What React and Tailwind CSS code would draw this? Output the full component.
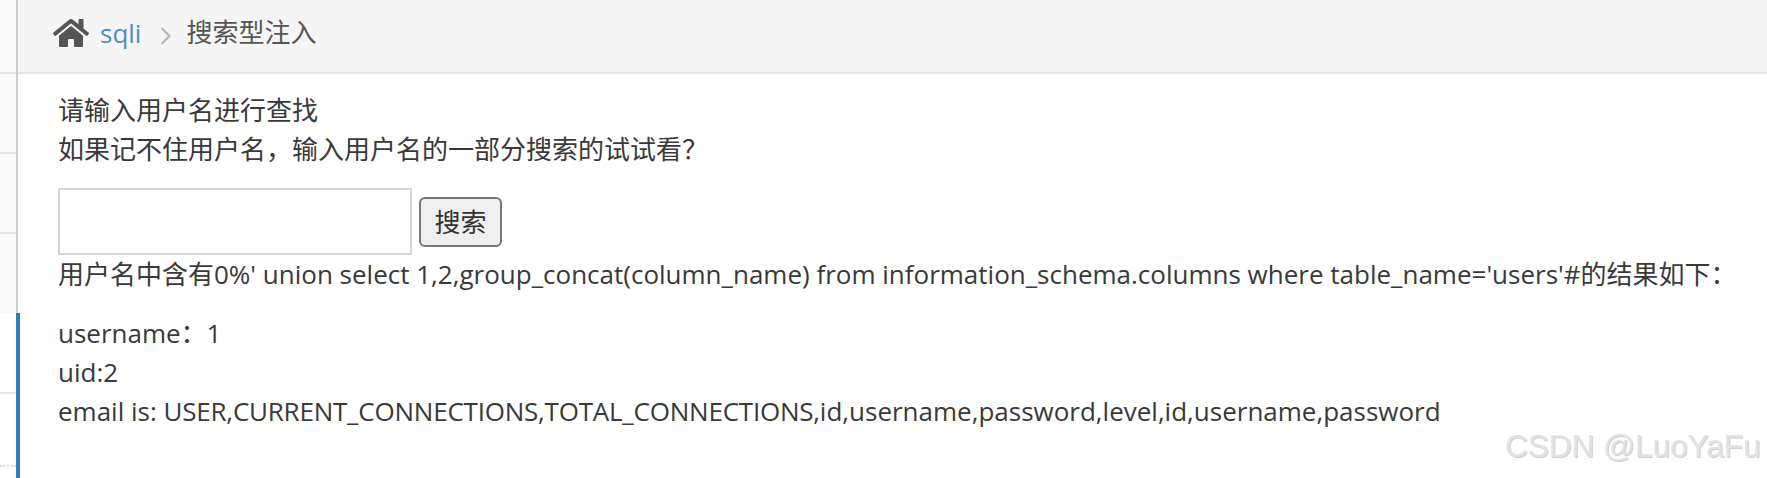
import React from 'react';
import { FaHome } from 'react-icons/fa';

const font = { fontFamily: '"Open Sans", "Noto Sans CJK SC", sans-serif' };

const App = () => {
  return (
    <div className="flex h-[478px] w-[1767px] overflow-hidden bg-white text-[#393939]" style={font}>
      {/* sidebar stub */}
      <div className="flex w-[20px] shrink-0 flex-col">
        <div className="flex w-[18px] flex-col border-r-2 border-[#cccccc] bg-[#f9f9f9]">
          <div className="h-[74px] border-b-2 border-[#e5e5e5]"></div>
          <div className="h-[80px] border-b-2 border-[#e5e5e5]"></div>
          <div className="h-[80px] border-b-2 border-[#e5e5e5]"></div>
          <div className="h-[79px]"></div>
        </div>
        <div className="flex flex-1 flex-col border-r-4 border-[#2b7dbc]">
          <div className="h-[81px] border-b-2 border-[#e5e5e5]"></div>
          <div className="h-[73px] border-b-2 border-dotted border-[#dddddd]"></div>
        </div>
      </div>

      <div className="min-w-0 flex-1">
        {/* breadcrumbs */}
        <div className="-ml-[2px] flex h-[74px] items-center border-b-2 border-[#e5e5e5] bg-[#f5f5f5] pb-[5px] pl-[35px] text-[26px]">
          <FaHome className="-mt-[2px] h-[36px] w-[36px] text-[#555555]" />
          <a className="ml-[11px] text-[#4c8fbd]">sqli</a>
          <svg className="ml-[19px] mr-[15px] mt-[4px] h-[20px] w-[11px] text-[#b2b6bf]" viewBox="0 0 11 20" fill="none" stroke="currentColor" strokeWidth="2.2">
            <path d="M1.5 2 9.5 10 1.5 18" />
          </svg>
          <span className="-mt-[2px] text-[#555555]">搜索型注入</span>
        </div>

        {/* page content */}
        <div className="pl-[38px] pt-[17px] text-[26px] leading-[39px]">
          <p>请输入用户名进行查找</p>
          <p>如果记不住用户名，输入用户名的一部分搜索的试试看？</p>
          <form className="mt-[19px] flex items-end">
            <input className="h-[67px] w-[354px] border-2 border-[#d5d5d5] bg-white" />
            <button type="button" className="mb-[8px] ml-[7px] flex h-[50px] w-[83px] items-center justify-center rounded-[6px] border-2 border-[#767676] bg-[#efefef] text-[26px] text-[#333333]">搜索</button>
          </form>
          <p>用户名中含有0%' union select 1,2,group_concat(column_name) from information_schema.columns where table_name='users'#的结果如下：</p>
          <div className="mt-[20px]">
            <p>username：1</p>
            <p>uid:2</p>
            <p>email is: <span className="tracking-[-0.22px]">USER,CURRENT_CONNECTIONS,TOTAL_CONNECTIONS,</span>id,username,password,level,id,username,password</p>
          </div>
        </div>
      </div>

      {/* csdn watermark */}
      <div className="absolute left-[1505px] top-[427px] whitespace-nowrap text-[31.5px] leading-[38px] text-[#e2e2e2] [text-shadow:1px_1px_0_#cfcfcf]" style={{ fontFamily: '"Liberation Sans", sans-serif' }}>CSDN @LuoYaFu</div>
    </div>
  );
};

export default App;
